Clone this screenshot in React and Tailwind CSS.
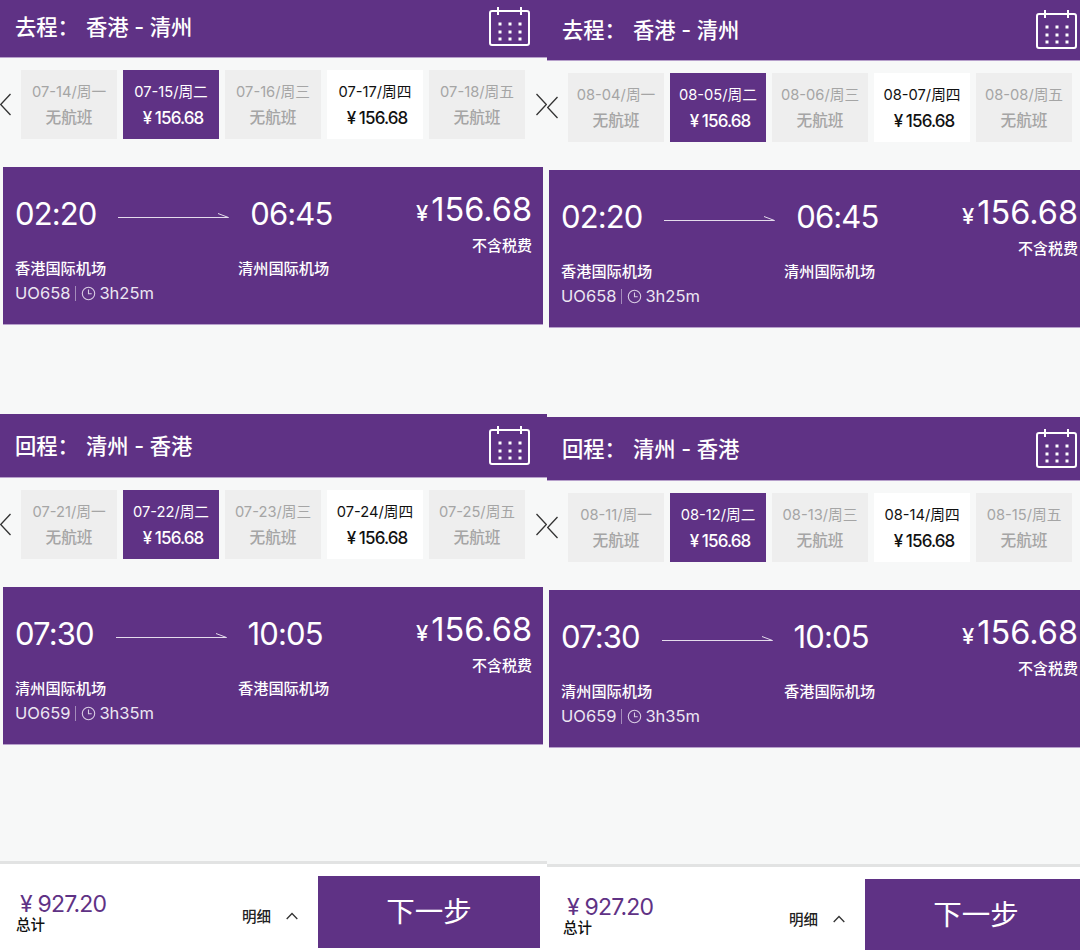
const FONT = 'font-[Inter,"Noto_Sans_CJK_SC","Noto_Sans",sans-serif]';

function Calendar() {
  const xs = [11, 21, 31];
  const ys = [17, 25, 32];
  return (
    <svg width="41" height="39" viewBox="0 0 41 39" fill="none" stroke="#fff" strokeWidth="2" className="shrink-0">
      <rect x="1" y="4" width="39" height="34" rx="2" />
      <path d="M9 0v8M32 0v8" />
      {ys.map((y) => xs.map((x) => <rect key={`${x}-${y}`} x={x - 1.5} y={y - 1.5} width="3" height="3" fill="#fff" stroke="none" />))}
    </svg>
  );
}

function Chevron({ dir }) {
  return (
    <svg width="11" height="23" viewBox="0 0 11 23" fill="none" stroke="#333" strokeWidth="1.3" className="shrink-0">
      {dir === "left" ? <path d="M10.5 1 L0.7 11.5 L10.5 22" /> : <path d="M0.5 1 L10.3 11.5 L0.5 22" />}
    </svg>
  );
}

function Clock() {
  return (
    <svg width="15" height="15" viewBox="0 0 15 15" fill="none" stroke="#d9cde3" strokeWidth="1.1" className="shrink-0">
      <circle cx="7.5" cy="7.5" r="6.2" />
      <path d="M7.5 3.6v4.2h3.2" />
    </svg>
  );
}

function Arrow() {
  return (
    <svg width="111" height="8" viewBox="0 0 111 8" fill="none" stroke="#e4dcec" strokeWidth="1" className="shrink-0">
      <path d="M0 5.5H110.5L100 1.5" />
    </svg>
  );
}

function DateCell({ date, price, state }) {
  const cls =
    state === "selected"
      ? "bg-[#5f3285] text-white"
      : state === "open"
        ? "bg-white text-[#111]"
        : "bg-[#eeeeee] text-[#a5a5a5]";
  return (
    <div className={`w-[96px] h-[69px] shrink-0 flex flex-col items-center ${cls}`}>
      <div className="mt-[12px] text-[14.7px] leading-[20px] whitespace-nowrap">{date}</div>
      {price ? (
        <div className="mt-[4px] ml-[4px] text-[17px] leading-[24px] tracking-[-0.9px] whitespace-nowrap font-medium">¥ 156.68</div>
      ) : (
        <div className="mt-[4px] text-[15.7px] leading-[24px] whitespace-nowrap font-medium">无航班</div>
      )}
    </div>
  );
}

function Flight({ d, cardMl }) {
  return (
    <div className={`w-[540px] h-[158px] shrink-0 bg-[#5f3285] border-b border-[#b7a0cb] text-white flex ${cardMl}`}>
      <div className="flex-1 pl-[12px] flex flex-col">
        <div className="mt-[28px] flex items-center h-[38px]">
          <span className="text-[31px] leading-[38px] tracking-[-0.9px] whitespace-nowrap">{d.dep}</span>
          <span className="ml-[22px] mr-[21px] mt-[3px] flex"><Arrow /></span>
          <span className="text-[31px] leading-[38px] tracking-[-0.9px] whitespace-nowrap">{d.arr}</span>
        </div>
        <div className="mt-[25px] flex text-[15.2px] leading-[22px] font-medium">
          <span className="w-[223px]">{d.from}</span>
          <span>{d.to}</span>
        </div>
        <div className="mt-[1px] flex items-center text-[16.5px] leading-[24px] text-[#ece6f2] whitespace-nowrap">
          <span>{d.no}</span>
          <span className="mx-[5px] w-px h-[15px] bg-[#a58cbb]"></span>
          <Clock />
          <span className="ml-[3px]">{d.dur}</span>
        </div>
      </div>
      <div className="pr-[11px] flex flex-col items-end">
        <div className="mt-[22px] flex items-baseline leading-[42px] whitespace-nowrap">
          <span className="text-[22px] mr-[3px] font-medium">¥</span>
          <span className="text-[32.5px]">156.68</span>
        </div>
        <div className="mt-[1px] text-[15px] leading-[22px] font-medium">不含税费</div>
      </div>
    </div>
  );
}

function Section({ s, first, cardMl }) {
  return (
    <div className="flex flex-col">
      <div className={`bg-[#5f3285] border-b border-[#b7a0cb] flex items-center justify-between text-white pl-[15px] pr-[17px] ${first ? "h-[58px] pb-[5px]" : "h-[64px]"}`}>
        <div className="mt-[1px] text-[21.3px] leading-[30px] flex whitespace-nowrap font-medium">
          <span className="w-[71px]">{s.label}</span>
          <span>{s.route}</span>
        </div>
        <Calendar />
      </div>
      <div className="flex items-center mt-[12px]">
        <Chevron dir="left" />
        <div className="flex gap-[6px] ml-[10px] mr-[11px]">
          {s.dates.map((c) => <DateCell key={c.date} {...c} />)}
        </div>
        <Chevron dir="right" />
      </div>
      <div className="mt-[28px]">
        <Flight d={s.flight} cardMl={cardMl} />
      </div>
    </div>
  );
}

function week(month, start) {
  const names = ["周一", "周二", "周三", "周四", "周五"];
  return names.map((n, i) => ({
    date: `${month}-${String(start + i).padStart(2, "0")}/${n}`,
    price: i === 1 || i === 3,
    state: i === 1 ? "selected" : i === 3 ? "open" : "none",
  }));
}

function Column({ month, a, b, cardMl, cls }) {
  const out = {
    label: "去程：",
    route: "香港 - 清州",
    dates: week(month, a),
    flight: { dep: "02:20", arr: "06:45", from: "香港国际机场", to: "清州国际机场", no: "UO658", dur: "3h25m" },
  };
  const back = {
    label: "回程：",
    route: "清州 - 香港",
    dates: week(month, b),
    flight: { dep: "07:30", arr: "10:05", from: "清州国际机场", to: "香港国际机场", no: "UO659", dur: "3h35m" },
  };
  return (
    <div className={`w-[547px] shrink-0 flex flex-col ${cls}`}>
      <Section s={out} first cardMl={cardMl} />
      <div className="mt-[89px]">
        <Section s={back} cardMl={cardMl} />
      </div>
      <div className="mt-[116px] border-t-[3px] border-[#e2e3e3] bg-white h-[90px] shrink-0 flex items-start">
        <div className="w-[236px] pl-[16px] pt-[25px] shrink-0">
          <div className="pl-[4px] text-[23px] leading-[30px] text-[#5f3285] tracking-[-0.8px] whitespace-nowrap">¥ 927.20</div>
          <div className="-mt-[2px] text-[14.5px] leading-[16px] text-[#111] font-medium">总计</div>
        </div>
        <div className="ml-[6px] w-[76px] pt-[42px] flex items-center text-[14.5px] leading-[22px] text-[#222] font-medium">
          <span>明细</span>
          <svg width="12" height="8" viewBox="0 0 12 8" fill="none" stroke="#333" strokeWidth="1.3" className="ml-[15px] -mt-[3px]">
            <path d="M0.7 7L6 1.5L11.3 7" />
          </svg>
        </div>
        <div className="mt-[12px] w-[222px] h-[72px] shrink-0 bg-[#5f3285] flex items-center justify-center text-white text-[28.5px] pt-[1px]">下一步</div>
      </div>
    </div>
  );
}

export default function App() {
  return (
    <div className={`w-[1080px] h-[950px] overflow-hidden flex bg-[#f7f8f8] ${FONT}`}>
      <Column month="07" a={14} b={21} cardMl="ml-[3px]" cls="" />
      <Column month="08" a={4} b={11} cardMl="ml-[2px]" cls="border-t-[3px] border-[#5f3285]" />
    </div>
  );
}
